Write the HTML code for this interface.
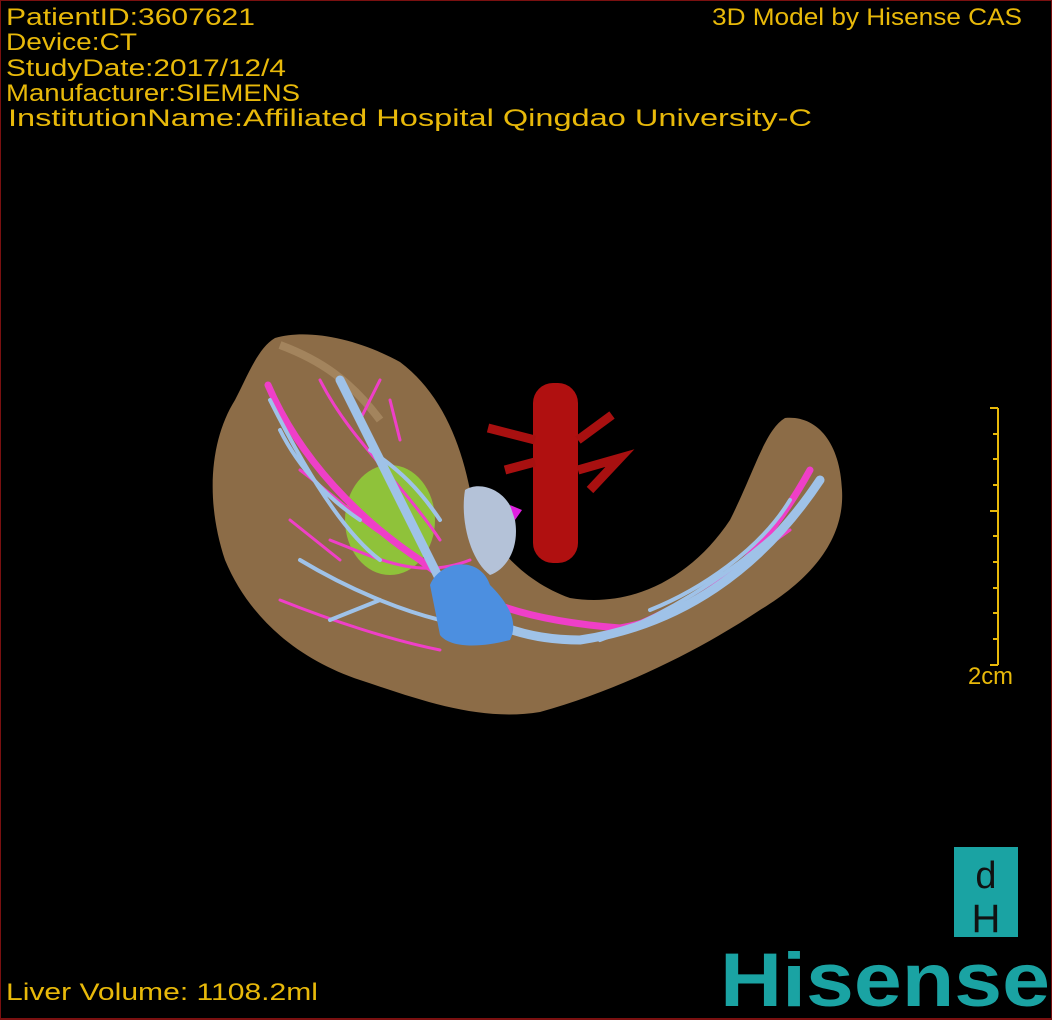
<!DOCTYPE html>
<html><head><style>
html,body{margin:0;padding:0;background:#000;}
#w{position:relative;width:1052px;height:1020px;overflow:hidden;background:#000;box-sizing:border-box;border:1px solid #7a1010;border-bottom:2px solid #7a1010;}
svg text.t{fill:#e8b90a;font-family:"Liberation Sans","Noto Sans CJK SC",sans-serif;font-size:24px;}
</style></head><body><div id="w">
<svg width="1052" height="1020" style="position:absolute;left:-1px;top:-1px">
<text class="t" x="6" y="25" textLength="249" lengthAdjust="spacingAndGlyphs">PatientID:3607621</text>
<text class="t" x="6" y="50" textLength="131" lengthAdjust="spacingAndGlyphs">Device:CT</text>
<text class="t" x="6" y="76" textLength="280" lengthAdjust="spacingAndGlyphs">StudyDate:2017/12/4</text>
<text class="t" x="6" y="101" textLength="294" lengthAdjust="spacingAndGlyphs">Manufacturer:SIEMENS</text>
<text class="t" x="8" y="126" textLength="804" lengthAdjust="spacingAndGlyphs">InstitutionName:Affiliated Hospital Qingdao University-C</text>
<text class="t" x="712" y="25" textLength="310" lengthAdjust="spacingAndGlyphs">3D Model by Hisense CAS</text>
<text class="t" x="6" y="1000" textLength="312" lengthAdjust="spacingAndGlyphs">Liver Volume: 1108.2ml</text>
<text class="t" x="968" y="684" textLength="45" lengthAdjust="spacingAndGlyphs">2cm</text>
<g stroke="#e8b90a" stroke-width="2">
<line x1="998" y1="408" x2="998" y2="665"/>
<line x1="990" y1="408" x2="998" y2="408"/><line x1="990" y1="665" x2="998" y2="665"/>
<line x1="993" y1="434" x2="998" y2="434"/><line x1="993" y1="459" x2="998" y2="459"/><line x1="993" y1="485" x2="998" y2="485"/><line x1="990" y1="511" x2="998" y2="511"/><line x1="993" y1="536" x2="998" y2="536"/><line x1="993" y1="562" x2="998" y2="562"/><line x1="993" y1="588" x2="998" y2="588"/><line x1="993" y1="613" x2="998" y2="613"/><line x1="993" y1="639" x2="998" y2="639"/>
</g>
<path d="M275 338 C310 328 360 340 400 362 C440 392 460 440 470 490 C485 540 520 580 570 598 C630 608 690 580 730 520 C755 470 765 430 785 418 C815 415 840 440 842 490 C845 540 810 580 760 610 C700 650 620 690 540 712 C480 722 420 700 360 680 C300 660 250 620 225 560 C205 500 210 440 235 400 C248 375 258 348 275 338Z" fill="#8c6c47"/>
<path d="M280 345 C320 360 350 380 380 420" stroke="#a3845d" stroke-width="8" fill="none"/>
<ellipse cx="390" cy="520" rx="45" ry="55" fill="#8fc23a"/>
<rect x="533" y="383" width="45" height="180" rx="20" fill="#b01010"/>
<path d="M535 440 L488 428 M535 462 L505 470 M578 440 L612 415 M578 470 L620 458 L590 490" stroke="#a81010" stroke-width="9" fill="none"/>
<g fill="none" stroke-linecap="round">
<path d="M268 385 C300 460 360 520 420 560 C470 600 520 620 620 628 C700 615 760 560 810 470" stroke="#ef3fc8" stroke-width="7"/>
<path d="M320 380 C350 440 400 480 440 540 M330 540 C380 560 420 580 470 560 M300 470 C340 500 370 530 400 545 M280 600 C330 620 390 640 440 650 M590 640 C660 620 720 580 790 530 M360 420 L380 380 M400 440 L390 400 M290 520 L340 560" stroke="#ef3fc8" stroke-width="3"/>
<path d="M340 380 C370 440 410 520 440 580 C470 620 520 640 580 640 C680 625 760 570 820 480" stroke="#9fc2e8" stroke-width="9"/>
<path d="M270 400 C300 460 340 530 380 560 M300 560 C350 590 400 610 440 620 M370 450 C400 470 420 490 440 520 M600 640 C680 610 750 560 800 510 M650 610 C700 590 760 550 790 500 M280 430 C300 470 330 500 360 520 M330 620 L380 600" stroke="#9fc2e8" stroke-width="4"/>
</g>
<path d="M430 585 C440 560 480 555 490 585 C505 600 520 620 510 640 C480 648 450 648 440 635 Z" fill="#4c8fe0"/>
<path d="M465 490 C480 480 510 490 515 520 C520 550 505 570 490 575 C470 560 460 520 465 490Z" fill="#b4c2d8"/>
<path d="M510 505 L522 510 L515 520Z" fill="#e020e0"/>
<rect x="954" y="847" width="64" height="90" fill="#1aa3a3"/>
<text x="986" y="888" font-family="Liberation Sans,sans-serif" font-size="38" fill="#111" text-anchor="middle">d</text>
<text x="986" y="932" font-family="Liberation Sans,sans-serif" font-size="40" fill="#111" text-anchor="middle">H</text>
<text x="720" y="1006" font-family="Liberation Sans,sans-serif" font-size="76" font-weight="bold" fill="#1aa3a3" textLength="330" lengthAdjust="spacingAndGlyphs">Hisense</text>
</svg>
</div></body></html>
